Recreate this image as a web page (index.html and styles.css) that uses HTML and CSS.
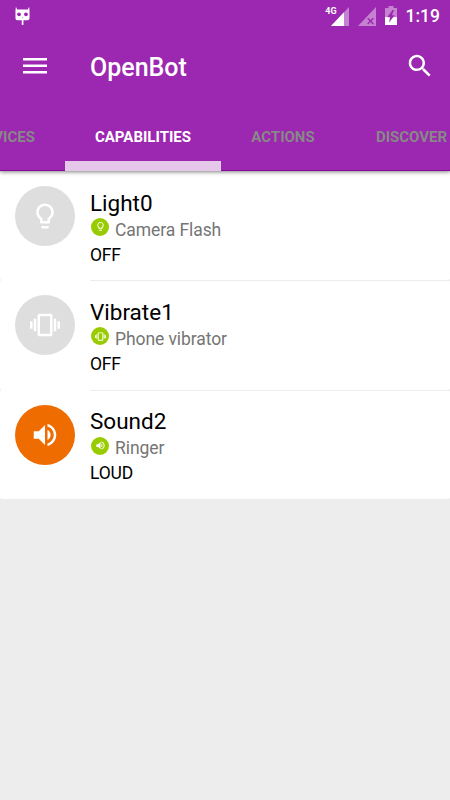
FILE: index.html
```html
<!DOCTYPE html>
<html lang="en">
<head>
<meta charset="utf-8">
<title>OpenBot</title>
<link rel="stylesheet" href="styles.css">
</head>
<body>
<svg class="symbols" aria-hidden="true">
  <symbol id="bulb" viewBox="0 0 24 24"><path d="M9 21c0 .55.45 1 1 1h4c.55 0 1-.45 1-1v-1H9v1zm3-19C8.14 2 5 5.14 5 9c0 2.38 1.19 4.47 3 5.74V17c0 .55.45 1 1 1h6c.55 0 1-.45 1-1v-2.260c1.81-1.270 3-3.360 3-5.740 0-3.860-3.140-7-7-7zm2.850 11.100l-.85.6V16h-4v-2.300l-.85-.6C7.800 12.160 7 10.630 7 9c0-2.760 2.240-5 5-5s5 2.240 5 5c0 1.630-.8 3.160-2.150 4.100z"/></symbol>
  <symbol id="vibrate" viewBox="0 0 24 24"><path d="M0 15h2V9H0v6zm3 2h2V7H3v10zm19-8v6h2V9h-2zm-3 8h2V7h-2v10zM16.500 3h-9C6.670 3 6 3.670 6 4.500v15c0 .83.67 1.500 1.500 1.500h9c.83 0 1.500-.67 1.500-1.500v-15c0-.83-.67-1.500-1.500-1.500zM16 19H8V5h8v14z"/></symbol>
  <symbol id="sound" viewBox="0 0 24 24"><path d="M3 9v6h4l5 5V4L7 9H3zm13.500 3c0-1.770-1.020-3.290-2.500-4.030v8.050c1.480-.73 2.500-2.250 2.500-4.020zM14 3.230v2.060c2.890.86 5 3.540 5 6.710s-2.110 5.850-5 6.710v2.060c4.010-.91 7-4.490 7-8.770s-2.990-7.860-7-8.770z"/></symbol>
</svg>
<header class="header">
  <div class="status">
    <svg class="cid" viewBox="0 0 16 20"><path d="M1 0L2.300 3h11.400L15 0l.5 4v8.500c0 1.100-.8 1.900-1.900 1.900H2.400c-1.100 0-1.900-.8-1.900-1.900V4z"/><path d="M7.200 14h1.800v5.500H7.200z"/><g class="eye"><circle cx="4.300" cy="8.200" r="2"/><circle cx="11.700" cy="8.200" r="2"/><path d="M7.500 11h1v.7h-1z"/></g></svg>
    <div class="status-right">
      <span class="network">4G</span>
      <svg class="signal" viewBox="0 0 18 19"><path class="dim" d="M0 19L18 0v19z"/><path d="M0 19L13 5.300V19z"/></svg>
      <svg class="signal no-sim" viewBox="0 0 18 19"><path class="dim" d="M0 19L18 0v19z"/><path class="cross" d="M9.700 11.200l5.600 5.800m0-5.800L9.700 17"/></svg>
      <svg class="battery" viewBox="0 0 12 19"><path class="dim" d="M3.500 0h5v2H12v9H0V2h3.500z"/><path d="M0 11h12v8H0z"/><path class="bolt" d="M7.500 4L2.300 11.300h2.800L4 16.500l5.700-7.200H6.900L9 4z"/></svg>
      <span class="clock">1:19</span>
    </div>
  </div>
  <div class="toolbar">
    <svg class="menu" viewBox="0 0 24 16"><path d="M0 0h24v2.600H0zm0 6.500h24v2.600H0zM0 13h24v2.600H0z"/></svg>
    <h1>OpenBot</h1>
    <svg class="search" viewBox="0 0 24 24"><path d="M15.500 14h-.79l-.28-.27C15.410 12.590 16 11.110 16 9.500 16 5.910 13.090 3 9.500 3S3 5.910 3 9.500 5.910 16 9.500 16c1.610 0 3.090-.59 4.230-1.570l.27.28v.79l5 4.990L20.490 19l-4.990-5zm-6 0C7.010 14 5 11.990 5 9.500S7.010 5 9.500 5 14 7.010 14 9.500 11.990 14 9.500 14z"/></svg>
  </div>
  <nav class="tabs">
    <span class="tab devices">DEVICES</span>
    <span class="tab active">CAPABILITIES</span>
    <span class="tab actions">ACTIONS</span>
    <span class="tab discover">DISCOVER</span>
  </nav>
</header>
<main class="list">
  <section class="row">
    <div class="avatar"><svg><use href="#bulb"/></svg></div>
    <div class="info">
      <h2>Light0</h2>
      <div class="source"><span class="badge"><svg><use href="#bulb"/></svg></span><span class="label">Camera Flash</span></div>
      <div class="state">OFF</div>
    </div>
  </section>
  <section class="row">
    <div class="avatar"><svg><use href="#vibrate"/></svg></div>
    <div class="info">
      <h2>Vibrate1</h2>
      <div class="source"><span class="badge"><svg><use href="#vibrate"/></svg></span><span class="label">Phone vibrator</span></div>
      <div class="state">OFF</div>
    </div>
  </section>
  <section class="row">
    <div class="avatar on"><svg><use href="#sound"/></svg></div>
    <div class="info">
      <h2>Sound2</h2>
      <div class="source"><span class="badge"><svg><use href="#sound"/></svg></span><span class="label">Ringer</span></div>
      <div class="state">LOUD</div>
    </div>
  </section>
</main>
</body>
</html>
```
FILE: styles.css
```css
* { box-sizing: border-box; }
html, body { height: 100%; }
body {
  margin: 0;
  overflow: hidden;
  background: #ededed;
  color: #000;
  font-family: Roboto, "Liberation Sans", sans-serif;
}
svg { display: block; flex: none; fill: #fff; }
.symbols { position: absolute; width: 0; height: 0; }
h1, h2 { margin: 0; font-weight: 400; }

.header {
  position: relative;
  height: 171px;
  background: #9c27b0;
  border-bottom: 1px solid #8a0a9d;
  box-shadow: 0 1px 4px rgba(0, 0, 0, .5);
  color: #fff;
}
.status {
  display: flex;
  justify-content: space-between;
  height: 30px;
  padding: 6px 10px 0 15px;
}
.cid { width: 15px; height: 20px; }
.eye { fill: #9c27b0; }
.status-right { display: flex; align-items: flex-start; }
.network { margin-right: -6px; font-size: 9px; line-height: 10px; font-weight: 700; }
.signal { width: 18px; height: 19px; margin: 1px 9px 0 0; }
.no-sim { margin-right: 9px; }
.dim { fill: #c582d1; }
.cross { fill: none; stroke: #9c27b0; stroke-width: 1.500; }
.battery { width: 12px; height: 19px; margin-right: 9px; }
.bolt { fill: #9c27b0; }
.clock { font-size: 17.500px; line-height: 21px; font-weight: 500; }

.toolbar {
  display: flex;
  align-items: center;
  height: 72px;
  padding: 0 15px 0 23px;
}
.menu { width: 24px; height: 16px; }
h1 { flex: 1; margin: 4px 0 0 43px; font-size: 25px; line-height: 30px; font-weight: 500; }
.search { width: 30px; height: 30px; }

.tabs { display: flex; height: 69px; overflow: hidden; }
.tab {
  flex: none;
  padding-top: 26px;
  font-size: 15px;
  line-height: 18px;
  font-weight: 700;
  text-align: center;
  color: #888;
}
.devices { width: 65px; padding-right: 30px; display: flex; justify-content: flex-end; }
.active { width: 156px; color: #fff; border-bottom: 10px solid #e5c7e9; }
.actions { width: 124px; }
.discover { width: 133px; }

.row {
  display: flex;
  height: 109.330px;
  padding: 15px 15px 0;
  background: #fff;
  border-radius: 2px;
}
.row + .row {
  background: linear-gradient(#ededed, #ededed) 90px 0 / 360px 1px no-repeat #fff;
}
.avatar {
  display: grid;
  place-items: center;
  flex: none;
  width: 60px;
  height: 60px;
  margin-right: 15px;
  border-radius: 50%;
  background: #dedede;
}
.avatar.on { background: #ef6c00; }
.avatar svg { width: 30px; height: 30px; }
h2 { margin-top: 3.600px; font-size: 22.500px; line-height: 26px; }
.source { display: flex; height: 25px; }
.badge {
  display: grid;
  place-items: center;
  width: 18px;
  height: 18px;
  margin: 2.400px 6px 0 1px;
  border-radius: 50%;
  background: #99cc00;
}
.badge svg { width: 11px; height: 11px; }
.label { padding-top: 4px; font-size: 17.500px; line-height: 21px; letter-spacing: -.08px; color: #757575; }
.state { padding-top: 4px; font-size: 17.500px; line-height: 21px; letter-spacing: -.2px; }
```
